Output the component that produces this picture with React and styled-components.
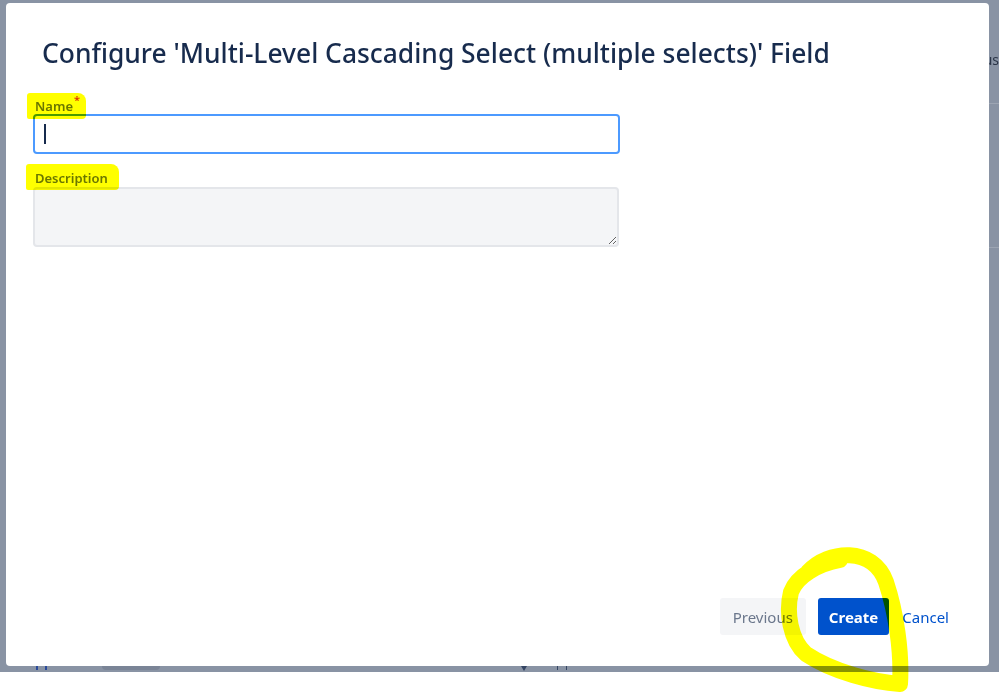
import React from 'react';
import styled, { createGlobalStyle } from 'styled-components';

const GlobalStyle = createGlobalStyle`
    html, body {
        margin: 0;
        padding: 0;
        background: #ffffff;
    }
    body {
        font-family: "Noto Sans", "Open Sans", "Liberation Sans", sans-serif;
    }
`;

const Screen = styled.div`
    width: 999px;
    height: 693px;
    display: flex;
    flex-direction: column;
    overflow: hidden;
    background: #ffffff;
`;

const Backdrop = styled.div`
    height: 672px;
    background: #8993a4;
    display: flex;
    align-items: flex-start;
    padding: 3px 0 0 6px;
    box-sizing: border-box;
    position: relative;
`;

const Modal = styled.div`
    width: 983px;
    height: 663px;
    background: #ffffff;
    border-radius: 4px;
    box-sizing: border-box;
    padding: 31px 39px 31px 27px;
    display: flex;
    flex-direction: column;
    position: relative;
`;

// Background page that peeks out right of the dialog
const SidePeek = styled.div`
    width: 10px;
    height: 100%;
    overflow: hidden;
    display: flex;
    flex-direction: column;

    .word {
        margin-top: 47px;
        direction: rtl;
        white-space: nowrap;
        font-size: 14px;
        color: #2b3547;
    }
    .rule {
        height: 1px;
        background: #9da5b3;
        margin-top: ${(p) => p.$gap || 34}px;
    }
`;

// Bits of the page that show under the dialog
const BottomPeek = styled.div`
    position: absolute;
    left: 0;
    right: 0;
    bottom: 0;
    height: 6px;
    display: flex;
    align-items: flex-start;

    .dots {
        margin-left: 36px;
        width: 11px;
        height: 4px;
        border-left: 2px solid #2a4a9a;
        border-right: 2px solid #2a4a9a;
        box-sizing: border-box;
    }
    .pill {
        margin-left: 55px;
        width: 58px;
        height: 4px;
        background: #7a8496;
        border-radius: 0 0 4px 4px;
    }
    .tri {
        margin-left: 361px;
        width: 0;
        height: 0;
        border-left: 3px solid transparent;
        border-right: 3px solid transparent;
        border-top: 5px solid #344563;
    }
    .marks {
        margin-left: 30px;
        width: 10px;
        height: 4px;
        border-left: 1px solid #344563;
        border-right: 1px solid #344563;
        box-sizing: border-box;
    }
`;

const Title = styled.h1`
    margin: 3px 0 29px 9px;
    font-size: 26.4px;
    line-height: 32px;
    font-weight: 500;
    color: #172b4d;
    white-space: nowrap;
`;

const Field = styled.div`
    display: flex;
    flex-direction: column;
    margin-bottom: ${(p) => p.$gap || 0}px;
`;

const Label = styled.label`
    font-size: 13px;
    line-height: 16px;
    font-weight: 600;
    color: #6b778c;
    padding-left: 2px;
    margin-bottom: ${(p) => p.$space || 0}px;
    position: relative;
    align-self: flex-start;
`;

const Marker = styled.span`
    position: absolute;
    left: ${(p) => p.$left}px;
    top: ${(p) => p.$top}px;
    width: ${(p) => p.$w}px;
    height: ${(p) => p.$h}px;
    background: #ffff00;
    border-radius: 3px 8px 4px 2px;
    mix-blend-mode: multiply;
    pointer-events: none;
    z-index: 2;
`;

const Star = styled.span`
    color: #de350b;
    font-size: 11px;
    vertical-align: top;
    position: relative;
    top: -6px;
    margin-left: 1px;
`;

const TextBox = styled.div`
    width: 587px;
    height: 40px;
    box-sizing: border-box;
    border: 2px solid #4c9aff;
    border-radius: 4px;
    background: #ffffff;
    display: flex;
    align-items: center;
    padding-left: 9px;
`;

const Caret = styled.span`
    width: 2px;
    height: 20px;
    background: #172b4d;
`;

const Area = styled.textarea`
    width: 586px;
    height: 60px;
    box-sizing: border-box;
    border: 2px solid #e4e6ea;
    border-radius: 4px;
    background: #f4f5f7;
    font-family: inherit;
    resize: both;
    margin: 0;
`;

const Footer = styled.div`
    margin-top: auto;
    display: flex;
    justify-content: flex-end;
    align-items: center;
    gap: 12px;
    position: relative;
`;

const Button = styled.button`
    height: 37px;
    padding: 0 ${(p) => (p.$variant === 'link' ? 1 : p.$variant === 'primary' ? 11 : 13)}px;
    border: none;
    border-radius: 3px;
    font-family: inherit;
    font-size: 15px;
    font-weight: ${(p) => (p.$variant === 'primary' ? 700 : 400)};
    background: ${(p) =>
        p.$variant === 'primary' ? '#0052cc' : p.$variant === 'link' ? 'transparent' : '#f4f5f7'};
    color: ${(p) =>
        p.$variant === 'primary' ? '#ffffff' : p.$variant === 'link' ? '#0052cc' : '#6b778c'};
    cursor: pointer;
`;

const Scribble = styled.svg`
    position: absolute;
    left: 778px;
    top: 542px;
    width: 135px;
    height: 151px;
    pointer-events: none;
    mix-blend-mode: multiply;
    z-index: 5;
`;

function App() {
    return (
        <Screen>
            <GlobalStyle />
            <Backdrop>
                <Modal>
                    <Title>Configure 'Multi-Level Cascading Select (multiple selects)' Field</Title>

                    <Field $gap={16}>
                        <Label $space={0}>
                            <Marker $left={-6} $top={-5} $w={59} $h={26} />
                            Name<Star>*</Star>
                        </Label>
                        <TextBox>
                            <Caret />
                        </TextBox>
                    </Field>

                    <Field>
                        <Label $space={1}>
                            <Marker $left={-7} $top={-6} $w={93} $h={26} />
                            Description
                        </Label>
                        <Area />
                    </Field>

                    <Footer>
                        <Button>Previous</Button>
                        <Button $variant="primary">Create</Button>
                        <Button $variant="link">Cancel</Button>
                    </Footer>
                </Modal>
                <SidePeek $gap={34}>
                    <div className="word">Status</div>
                    <div className="rule" />
                    <div className="rule" style={{ marginTop: 143 }} />
                </SidePeek>
                <BottomPeek>
                    <div className="dots" />
                    <div className="pill" />
                    <div className="tri" />
                    <div className="marks" />
                </BottomPeek>
                <Scribble viewBox="0 0 135 151">
                    <path
                        d="M30 30 C 50 8, 95 4, 108 40 C 118 70, 124 110, 122 142 C 95 140, 55 130, 28 112 C 12 98, 8 70, 13 50 C 19 34, 40 22, 62 18"
                        fill="none"
                        stroke="#ffff00"
                        strokeWidth="16"
                        strokeLinecap="round"
                        strokeLinejoin="round"
                    />
                </Scribble>
            </Backdrop>
        </Screen>
    );
}

export default App;
